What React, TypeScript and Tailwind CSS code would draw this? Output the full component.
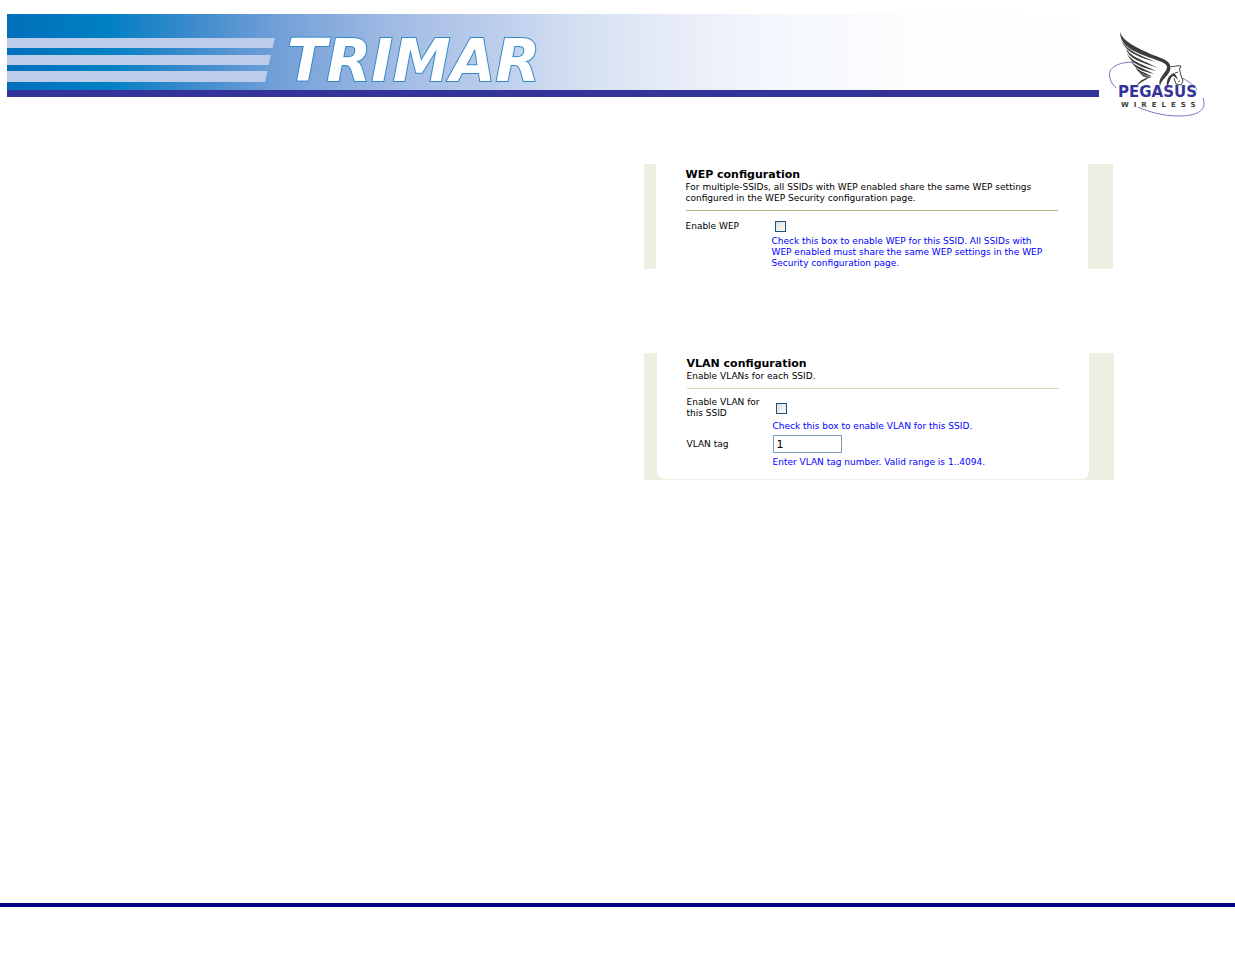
import type { ReactNode } from "react";

function TrimarLogo() {
  return (
    <svg width="560" height="76" viewBox="0 0 560 76" className="block overflow-visible" role="img" aria-label="Trimar">
      <g fill="#bccdea">
        <path d="M0 24H268L265.500 34H0z" />
        <path d="M0 41H264L261.500 51H0z" />
        <path d="M0 57H260.500L258 68H0z" />
      </g>
      <text
        x="280"
        y="67"
        fill="#fff"
        stroke="#3389c6"
        strokeWidth="2"
        paintOrder="stroke"
        className="font-['DejaVu_Sans',sans-serif] text-[58px] leading-none font-bold italic"
      >
        TRIMAR
      </text>
    </svg>
  );
}

function PegasusLogo() {
  return (
    <svg width="110" height="90" viewBox="0 0 110 90" className="block shrink-0" role="img" aria-label="Pegasus Wireless">
      {/* orbit */}
      <g fill="none" stroke="#7676be" strokeWidth="1">
        <path d="M36 34.500C26 33 11 37 10.500 46C10.500 52 13 56 17 60" />
        <path d="M83 50C89 53 95 57 98 62" />
        <path d="M39 79C50 84 64 88 80 88C95 88 109 84 104 70" />
      </g>
      {/* wing */}
      <g fill="#3c3c3c">
        <path d="M21 3.500C23 13 38 20 54 27C66 31 72 34 71.500 40C71 47 63 50 61 58C58 51 66 46 68 40C69 35 60 33 52 30C36 24 21 19 21 3.500z" />
        <path d="M22 9C23 20 40 27 57 34C43 30 24 25 22 9z" />
        <path d="M27 19C29 28 44 32 59 40C46 35 28 32 27 19z" />
        <path d="M28 25C31 33 45 37 57 43C45 40 31 36 28 25z" />
        <path d="M32 32C34 38 45 40 55 46C44 43 34 41 32 32z" />
        <path d="M36 37.500C38 43 46 44 53 48.500C44 47 38 45 36 37.500z" />
        <path d="M40 43C42 47 47 47 52 50C46 50 42 48 40 43z" />
        <path d="M37 59C40 52 45 51 52 48C48 52 42 53 37 59z" />
        <path d="M68 59C67 51 70 47 75 45C77 47 78 49 79 52C76 49 75 48 74 48C71 50 71 54 68 59z" />
      </g>
      {/* horse head */}
      <g fill="none" stroke="#4a4a4a" strokeWidth="1">
        <path d="M72 38.500C75 39 78 37 82 38L80.500 41L81.500 46L84 53L82 57L77 56L75 50" />
        <path d="M76 45L79 44M79 54L81 53" />
      </g>
      <text x="19" y="69" fill="#333399" className="font-['DejaVu_Sans',sans-serif] text-[15px] leading-none font-bold">
        PEGASUS
      </text>
      <text x="22" y="79" fill="#3c3c3c" className="font-['DejaVu_Sans',sans-serif] text-[7px] leading-none font-bold tracking-[5px]">
        WIRELESS
      </text>
    </svg>
  );
}

function Header() {
  return (
    <header className="flex items-start pt-[14px] pr-[26px] pl-[7px]">
      <div className="flex-1 border-b-[7px] border-[#333399] bg-[linear-gradient(90deg,#0070bb_0%,#0080c4_9%,#3d8bcc_17%,#72a0d8_25%,#a3bce4_36%,#c0d0ed_46%,#d3dff2_52%,#e5ebf7_60%,#f3f7fd_70%,#fdfdfe_83%,#ffffff_100%)]">
        <TrimarLogo />
      </div>
      <div className="pt-[14px]">
        <PegasusLogo />
      </div>
    </header>
  );
}

function Help({ id, children }: { id: string; children: ReactNode }) {
  return (
    <p id={id} className="col-start-2 text-[#0000ff]">
      {children}
    </p>
  );
}

const checkbox =
  "ml-[3px] block size-[11px] appearance-none border border-[#1d5281] bg-linear-to-br from-[#dcdcd7] to-white checked:bg-[#1d5281]";

export default function App() {
  return (
    <div className="flex min-h-screen flex-col bg-white font-['DejaVu_Sans',sans-serif] text-[9px] leading-[11px] text-black">
      <Header />

      <main className="grid grid-cols-2">
        <div className="col-start-2 flex flex-col gap-[84px] pt-[46px] pl-[26px]">
          <section className="max-w-[469px] border-r-[25px] border-l-[12px] border-[#eeeee2] px-[30px] pt-[3px]">
            <h2 className="text-[11px] leading-[15px] font-bold">WEP configuration</h2>
            <p>
              For multiple-SSIDs, all SSIDs with WEP enabled share the same WEP settings
              <br />
              configured in the WEP Security configuration page.
            </p>
            <hr className="mt-[6px] border-[#b5b587]" />
            <div className="grid grid-cols-[86px_1fr] items-center pt-[10px]">
              <label htmlFor="wep">Enable WEP</label>
              <input id="wep" type="checkbox" aria-describedby="wep-help" className={checkbox} />
              <div className="col-span-2 h-[4px]" />
              <Help id="wep-help">
                Check this box to enable WEP for this SSID. All SSIDs with
                <br />
                WEP enabled must share the same WEP settings in the WEP
                <br />
                Security configuration page.
              </Help>
            </div>
          </section>

          <section className="max-w-[470px] bg-[#eeeee2] pr-[25px] pb-px pl-[13px]">
            <div className="rounded-b-[8px] bg-white px-[30px] pt-[3px] pb-[11px]">
              <h2 className="text-[11px] leading-[15px] font-bold">VLAN configuration</h2>
              <p>Enable VLANs for each SSID.</p>
              <hr className="mt-[6px] border-[#d8d8c0]" />
              <div className="grid grid-cols-[86px_1fr] items-center pt-[8px]">
                <label htmlFor="vlan">
                  Enable VLAN for
                  <br />
                  this SSID
                </label>
                <input id="vlan" type="checkbox" aria-describedby="vlan-help" className={checkbox} />
                <div className="col-span-2 h-[2px]" />
                <Help id="vlan-help">Check this box to enable VLAN for this SSID.</Help>
                <div className="col-span-2 h-[3px]" />
                <label htmlFor="tag">VLAN tag</label>
                <input
                  id="tag"
                  type="text"
                  defaultValue="1"
                  aria-describedby="tag-help"
                  className="h-[18px] w-[69px] border border-[#7f9db9] px-[3px] text-[11px]"
                />
                <div className="col-span-2 h-[4px]" />
                <Help id="tag-help">Enter VLAN tag number. Valid range is 1..4094.</Help>
              </div>
            </div>
          </section>
        </div>
      </main>

      <footer className="mt-auto pb-[47px]">
        <div className="h-[4px] bg-[#000080]" />
      </footer>
    </div>
  );
}
